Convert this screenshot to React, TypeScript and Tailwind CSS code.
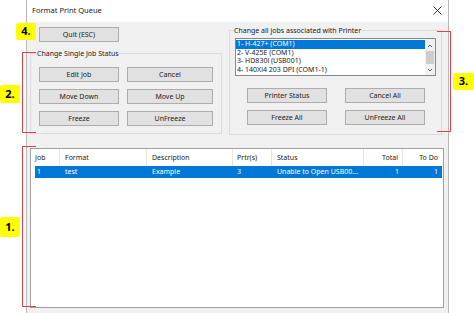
import React from 'react';

const font = { fontFamily: '"Noto Sans", "Open Sans", sans-serif' };

function Btn({ label, className = '' }: { label: string; className?: string }) {
  return (
    <div
      className={`flex h-[15px] items-center justify-center border border-[#adadad] bg-[#e1e1e1] text-[7px] leading-none text-[#222] ${className}`}
    >
      {label}
    </div>
  );
}

const cols = [
  { name: 'Job', w: 'w-[29px]', align: 'text-left pl-[4px]' },
  { name: 'Format', w: 'w-[87px]', align: 'text-left pl-[5px]' },
  { name: 'Description', w: 'w-[86px]', align: 'text-left pl-[5px]' },
  { name: 'Prtr(s)', w: 'w-[39px]', align: 'text-left pl-[4px]' },
  { name: 'Status', w: 'w-[92px]', align: 'text-left pl-[5px]' },
  { name: 'Total', w: 'w-[39px]', align: 'text-right pr-[4px]' },
  { name: 'To Do', w: 'w-[39px]', align: 'text-right pr-[4px]' },
];

const row = ['1', 'test', 'Example', '3', 'Unable to Open USB00...', '1', '1'];

const printers = ['1- H-427+ (COM1)', '2- V-425E (COM1)', '3- HD830i (USB001)', '4- 140Xi4 203 DPI (COM1-1)'];

export default function App() {
  return (
    <div className="relative h-[313px] w-[474px] overflow-hidden bg-white text-[#1a1a1a]" style={font}>
      <div className="ml-[26px] flex h-full w-[423px] flex-col border-x border-[#b9b9b9]">
        {/* title bar */}
        <div className="flex h-[22px] items-center justify-between bg-white pl-[5px] pr-[6px]">
          <span className="text-[7.5px]">Format Print Queue</span>
          <svg width="9" height="9" viewBox="0 0 9 9" className="mb-[1px]">
            <path d="M0.5 0.5 L8.5 8.5 M8.5 0.5 L0.5 8.5" stroke="#222" strokeWidth="0.9" />
          </svg>
        </div>

        <div className="flex flex-1 flex-col bg-[#f0f0f0] pl-[3px]">
          <div className="flex">
            {/* left column */}
            <div className="w-[192px]">
              <Btn label="Quit (ESC)" className="ml-[9px] mt-[5px] w-[80px]" />
              <fieldset className="mt-[7px] h-[85px] border border-[#dcdcdc]">
                <legend className="ml-[6px] text-[7px] leading-[9px]">Change Single Job Status</legend>
                <div className="ml-[8px] mt-[9px] grid grid-cols-[80px_86px] gap-x-[8px] gap-y-[7px]">
                  <Btn label="Edit Job" />
                  <Btn label="Cancel" />
                  <Btn label="Move Down" />
                  <Btn label="Move Up" />
                  <Btn label="Freeze" />
                  <Btn label="UnFreeze" />
                </div>
              </fieldset>
            </div>

            {/* right column */}
            <fieldset className="ml-[7px] mt-[4px] h-[109px] w-[213px] border border-[#dcdcdc]">
              <legend className="ml-[4px] text-[7px] leading-[9px]">Change all jobs associated with Printer</legend>
              <div className="ml-[5px] mt-[3px] flex h-[38px] w-[201px] border border-[#828790] bg-white">
                <div className="flex-1 pt-[1px] text-[7px] leading-[8.6px]">
                  {printers.map((p, i) => (
                    <div key={p} className={i === 0 ? 'bg-[#0078d7] pl-[1px] text-white' : 'pl-[1px]'}>
                      {p}
                    </div>
                  ))}
                </div>
                <div className="flex w-[10px] flex-col items-center bg-[#f0f0f0]">
                  <svg width="6" height="9" viewBox="0 0 6 9" className="mt-[2px]">
                    <path d="M1 6 L3 4 L5 6" stroke="#606060" strokeWidth="1" fill="none" />
                  </svg>
                  <div className="mt-[1px] h-[13px] w-[8px] bg-[#cdcdcd]" />
                  <svg width="6" height="9" viewBox="0 0 6 9" className="mt-auto">
                    <path d="M1 3 L3 5 L5 3" stroke="#606060" strokeWidth="1" fill="none" />
                  </svg>
                </div>
              </div>
              <div className="ml-[17px] mt-[12px] grid grid-cols-[80px_80px] gap-x-[18px] gap-y-[7px]">
                <Btn label="Printer Status" />
                <Btn label="Cancel All" />
                <Btn label="Freeze All" />
                <Btn label="UnFreeze All" />
              </div>
            </fieldset>
          </div>

          {/* job list */}
          <div className="mt-[13px] h-[160px] w-[414px] border border-[#a0a0a0] bg-white">
            <div className="flex h-[17px] items-center text-[7px]">
              {cols.map((c, i) => (
                <div
                  key={c.name}
                  className={`${c.w} ${c.align} ${i < cols.length - 1 ? 'border-r border-[#e5e5e5]' : ''} leading-[17px]`}
                >
                  {c.name}
                </div>
              ))}
            </div>
            <div className="ml-[4px] flex h-[12px] w-[407px] items-center bg-[#0078d7] text-[7px] text-white">
              {cols.map((c, i) => (
                <div key={c.name} className={`${i === 0 ? 'w-[25px] pl-[2px]' : c.w} ${i === 0 ? '' : c.align} leading-[12px]`}>
                  {row[i]}
                </div>
              ))}
            </div>
          </div>
        </div>
      </div>

      {/* annotations */}
      <div className="absolute left-[16px] top-[23px] flex h-[17px] w-[20px] items-center justify-center rounded-[2px] bg-[#ffff00] text-[11px] font-bold text-black">4.</div>
      <div className="absolute left-0 top-[85px] flex h-[18px] w-[20px] items-center justify-center rounded-[2px] bg-[#ffff00] text-[11px] font-bold text-black">2.</div>
      <div className="absolute left-[453px] top-[73px] flex h-[17px] w-[21px] items-center justify-center rounded-[2px] bg-[#ffff00] text-[11px] font-bold text-black">3.</div>
      <div className="absolute left-0 top-[217px] flex h-[20px] w-[20px] items-center justify-center rounded-[2px] bg-[#ffff00] text-[11px] font-bold text-black">1.</div>

      <div className="absolute left-[22px] top-[52px] h-[81px] w-[14px] border-y border-l border-[#e0424a]" />
      <div className="absolute left-[22px] top-[146px] h-[161px] w-[14px] border-y border-l border-[#e0424a]" />
      <div className="absolute left-[437px] top-[31px] h-[101px] w-[14px] border-y border-r border-[#e0424a]" />
    </div>
  );
}
